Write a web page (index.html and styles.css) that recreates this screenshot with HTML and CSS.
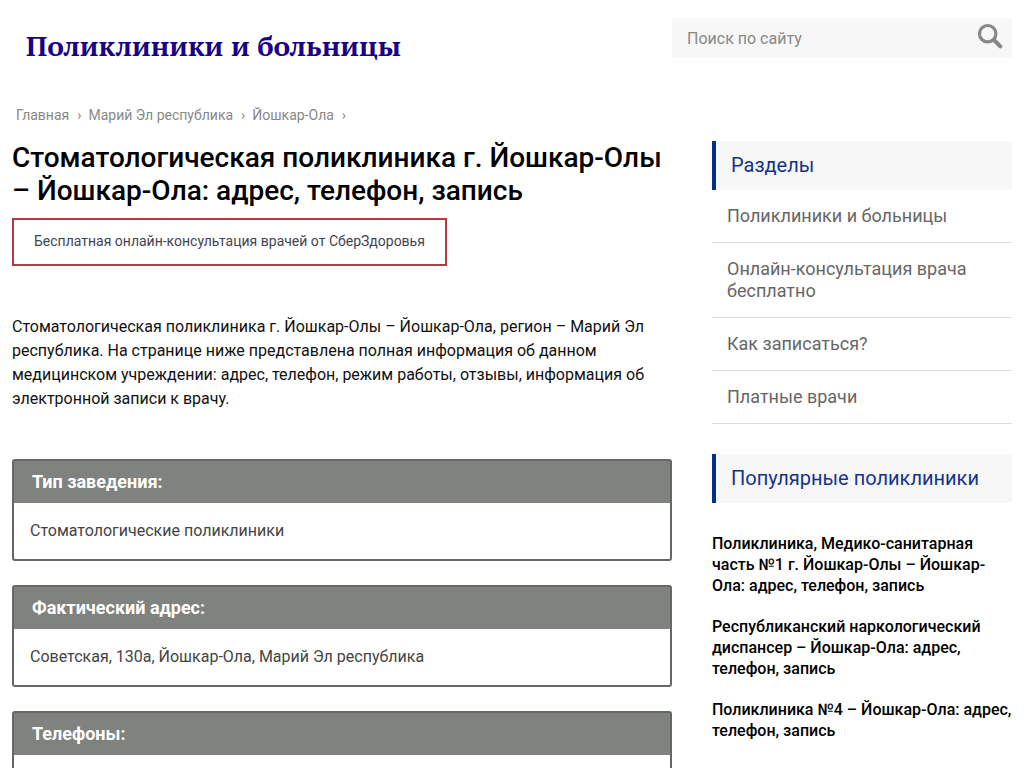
FILE: index.html
```html
<!DOCTYPE html>
<html lang="ru">
<head>
<meta charset="utf-8">
<meta name="viewport" content="width=device-width, initial-scale=1">
<title>Поликлиники и больницы</title>
<link rel="stylesheet" href="styles.css">
</head>
<body>
<div class="page">
  <header class="header">
    <a class="logo" href="#">Поликлиники и больницы</a>
    <form class="search">
      <input class="search-input" type="text" placeholder="Поиск по сайту" aria-label="Поиск по сайту">
      <button class="search-button" type="submit" aria-label="Найти">
        <svg class="search-icon" viewBox="0 0 26 26" aria-hidden="true"><circle cx="10.7" cy="10.7" r="8.2" fill="none" stroke="#888" stroke-width="3.2"/><path d="M17 17l6.3 6.3" stroke="#888" stroke-width="4" stroke-linecap="round"/></svg>
      </button>
    </form>
  </header>
  <nav class="crumbs" aria-label="Навигация">
    <a href="#">Главная</a><a href="#">Марий Эл республика</a><a href="#">Йошкар-Ола</a>
  </nav>
  <div class="columns">
    <main class="main">
      <h1 class="title">Стоматологическая поликлиника г. Йошкар-Олы – Йошкар-Ола: адрес, телефон, запись</h1>
      <a class="promo" href="#">Бесплатная онлайн-консультация врачей от СберЗдоровья</a>
      <p class="intro">Стоматологическая поликлиника г. Йошкар-Олы – Йошкар-Ола, регион – Марий Эл республика. На странице ниже представлена полная информация об данном медицинском учреждении: адрес, телефон, режим работы, отзывы, информация об электронной записи к врачу.</p>
      <section class="card">
        <h2 class="card-title">Тип заведения:</h2>
        <p class="card-text">Стоматологические поликлиники</p>
      </section>
      <section class="card">
        <h2 class="card-title">Фактический адрес:</h2>
        <p class="card-text">Советская, 130а, Йошкар-Ола, Марий Эл республика</p>
      </section>
      <section class="card">
        <h2 class="card-title">Телефоны:</h2>
        <p class="card-text"></p>
      </section>
    </main>
    <aside class="sidebar">
      <h2 class="side-title">Разделы</h2>
      <ul class="menu">
        <li><a href="#">Поликлиники и больницы</a></li>
        <li><a href="#">Онлайн-консультация врача бесплатно</a></li>
        <li><a href="#">Как записаться?</a></li>
        <li><a href="#">Платные врачи</a></li>
      </ul>
      <h2 class="side-title">Популярные поликлиники</h2>
      <div class="popular">
        <a href="#">Поликлиника, Медико-санитарная часть №1 г. Йошкар-Олы – Йошкар-Ола: адрес, телефон, запись</a>
        <a href="#">Республиканский наркологический диспансер – Йошкар-Ола: адрес, телефон, запись</a>
        <a href="#">Поликлиника №4 – Йошкар-Ола: адрес, телефон, запись</a>
      </div>
    </aside>
  </div>
</div>
</body>
</html>
```
FILE: styles.css
```css
* { box-sizing: border-box; }
body {
  margin: 0;
  height: 100vh;
  overflow: hidden;
  background: #fff;
  color: #111;
  font: 16px/24px Roboto, "Liberation Sans", sans-serif;
}
a { color: inherit; text-decoration: none; }
h1, h2, p, ul { margin: 0; padding: 0; font-weight: 400; }
.page { max-width: 1200px; margin: 0 auto; padding: 18px 12px 0; }
.header {
  display: flex;
  align-items: flex-start;
  justify-content: space-between;
  height: 88px;
}
.logo {
  padding: 8px 0 0 14px;
  color: #170087;
  font: 700 28px/40px "PT Serif", "Liberation Serif", serif;
}
.search { display: flex; width: 340px; height: 40px; background: #f7f7f7; }
.search-input {
  flex: 1;
  min-width: 0;
  padding: 2px 15px 0;
  border: 0;
  background: transparent;
  color: #888;
  font: inherit;
}
.search-input::placeholder { color: #888; opacity: 1; }
.search-button { padding: 5px 9px 9px; border: 0; background: transparent; }
.search-icon { display: block; width: 26px; height: 26px; }
.crumbs {
  display: flex;
  padding-left: 4px;
  margin-bottom: 17px;
  color: #888;
  font-size: 14px;
  line-height: 18px;
}
.crumbs a::after { content: "›"; margin: 0 7px 0 8px; }
.columns { display: grid; grid-template-columns: minmax(0, 1fr) 300px; gap: 40px; }
.title { color: #000; font-size: 28px; font-weight: 500; line-height: 33px; }
.promo {
  display: inline-block;
  margin: 11px 0 49px;
  padding: 9px 20px 11px;
  border: 2px solid #b63a42;
  color: #424453;
  font-size: 14px;
}
.intro { margin-bottom: 48px; }
.card {
  margin-bottom: 24px;
  border: 2px solid #666866;
  border-radius: 3px;
}
.card-title {
  padding: 9px 18px;
  background: #80827f;
  color: #fff;
  font-size: 18px;
  font-weight: 700;
}
.card-text { min-height: 56px; padding: 16px; color: #444; }
.side-title {
  padding: 12px 15px;
  border-left: 4px solid #003087;
  background: #f7f7f7;
  color: #14348c;
  font-size: 20px;
  line-height: 25px;
}
.menu { margin-bottom: 30px; list-style: none; color: #666; font-size: 18px; line-height: 22px; }
.menu li { padding: 15px; border-bottom: 1px solid #ddd; }
.popular {
  display: grid;
  gap: 20px;
  padding-top: 30px;
  color: #000;
  font-weight: 500;
  line-height: 21px;
}
```
